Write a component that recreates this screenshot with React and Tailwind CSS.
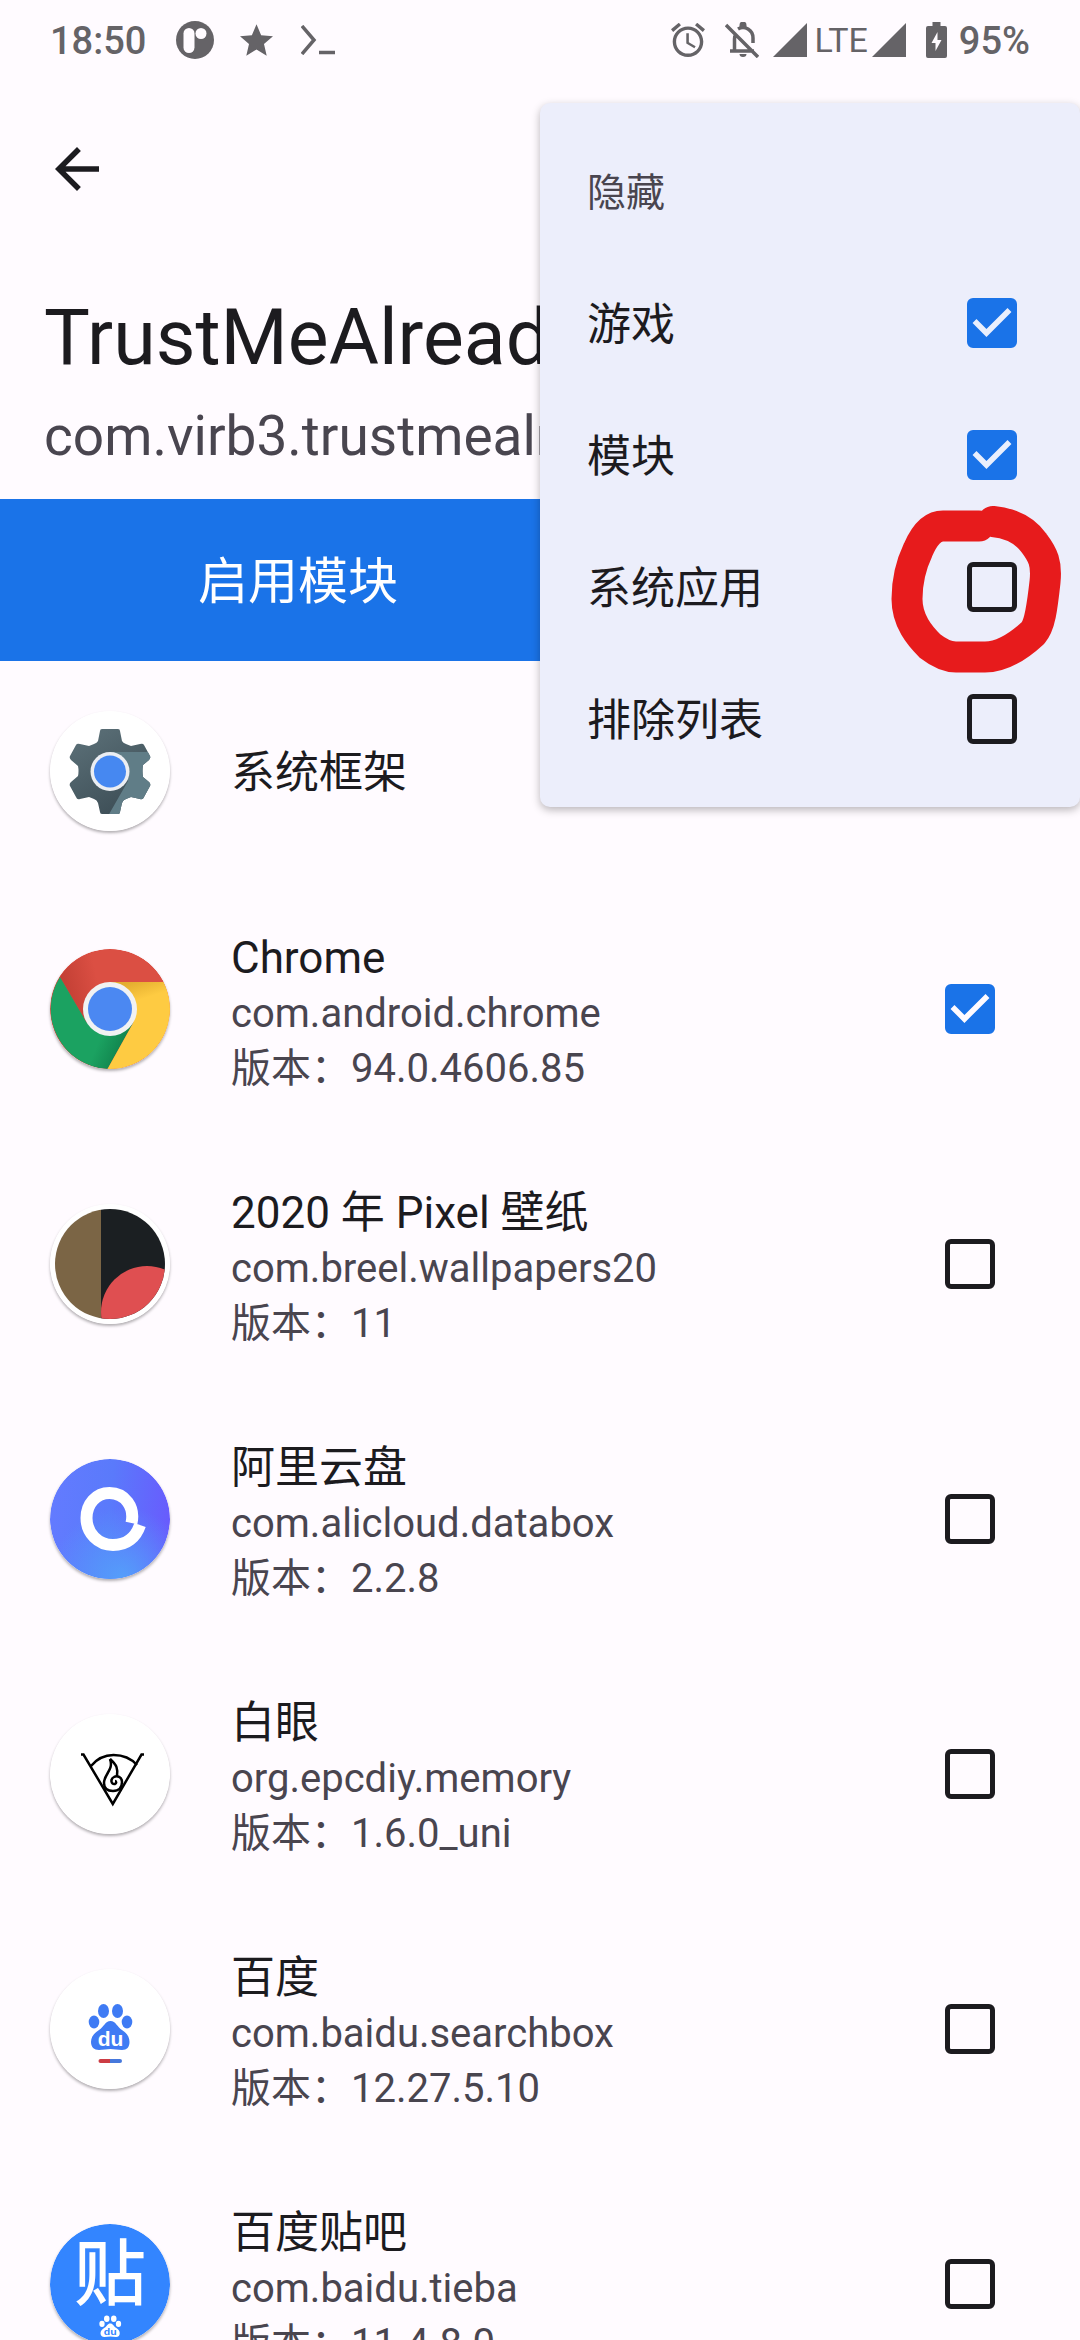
import React from "react";

const filters = [
  { id: "games", label: "游戏", checked: true },
  { id: "modules", label: "模块", checked: true },
  { id: "system", label: "系统应用", checked: false, marked: true },
  { id: "denylist", label: "排除列表", checked: false },
];

const apps = [
  { name: "Chrome", pkg: "com.android.chrome", version: "94.0.4606.85", checked: true, Icon: ChromeIcon },
  { name: "2020 年 Pixel 壁纸", pkg: "com.breel.wallpapers20", version: "11", Icon: WallpaperIcon },
  { name: "阿里云盘", pkg: "com.alicloud.databox", version: "2.2.8", Icon: AliDriveIcon },
  { name: "白眼", pkg: "org.epcdiy.memory", version: "1.6.0_uni", Icon: MemoryIcon },
  { name: "百度", pkg: "com.baidu.searchbox", version: "12.27.5.10", Icon: BaiduIcon },
  { name: "百度贴吧", pkg: "com.baidu.tieba", version: "11.4.8.0", Icon: TiebaIcon },
];

function Checkbox({ id, defaultChecked, tick }) {
  return (
    <span className="relative block size-[50px] shrink-0">
      <input
        id={id}
        type="checkbox"
        defaultChecked={defaultChecked}
        className="peer block size-[50px] appearance-none rounded-[6px] border-[5px] border-[#1c1b1f] checked:border-[#1a73e8] checked:bg-[#1a73e8]"
      />
      <svg viewBox="3 3 18 18" className={"pointer-events-none absolute inset-0 hidden size-full peer-checked:block " + tick} aria-hidden="true">
        <path fill="currentColor" d="M10 17l-5-5 1.41-1.41L10 14.17l7.59-7.59L19 8z" />
      </svg>
    </span>
  );
}

function IconShell({ children, bg }) {
  return (
    <svg viewBox="0 0 120 120" className="size-[120px] shrink-0 rounded-full shadow-[0_2px_3px_rgba(0,0,0,0.3)]" aria-hidden="true">
      <circle cx="60" cy="60" r="60" fill={bg} />
      {children}
    </svg>
  );
}

function GearIcon() {
  return (
    <IconShell bg="#ffffff">
      <defs>
        <linearGradient id="gearDark" x1="0" y1="0" x2="0.6" y2="1">
          <stop offset="0" stopColor="#5f747c" />
          <stop offset="1" stopColor="#3d4e56" />
        </linearGradient>
        <clipPath id="gearClip">
          <path d="M52 18H68Q70 18 70 20L72 30Q73 32 76 33L81 35L90 33Q93 32 94 34L100 45Q101 47 99 49L93 54Q92 60 93 66L99 71Q101 73 100 75L94 86Q93 89 90 88L81 86L76 88Q73 89 72 92L70 101Q70 103 68 103H52Q50 103 50 101L48 92Q47 89 44 88L39 86L30 88Q27 89 26 86L20 75Q19 73 21 71L28 65Q29 60 28 55L21 49Q19 47 20 45L26 34Q27 32 30 33L39 35L44 33Q47 32 48 30L50 20Q50 18 52 18Z" />
        </clipPath>
      </defs>
      <g clipPath="url(#gearClip)">
        <rect x="15" y="15" width="90" height="90" fill="url(#gearDark)" />
        <path d="M60 41H105V105H58L78 70Z" fill="#607d87" />
      </g>
      <circle cx="60" cy="60.500" r="19.500" fill="#eceef2" />
      <circle cx="60" cy="60.500" r="16" fill="#4688f1" />
    </IconShell>
  );
}

function ChromeIcon() {
  return (
    <IconShell bg="#db4b3f">
      <defs>
        <linearGradient id="chromeRed" x1="10" y1="28" x2="45" y2="20" gradientUnits="userSpaceOnUse">
          <stop offset="0" stopColor="#c23f34" />
          <stop offset="1" stopColor="#db4f43" />
        </linearGradient>
        <linearGradient id="chromeGreen" x1="83" y1="90" x2="55" y2="78" gradientUnits="userSpaceOnUse">
          <stop offset="0" stopColor="#0f7d49" />
          <stop offset="1" stopColor="#1ba261" />
        </linearGradient>
        <linearGradient id="chromeYellow" x1="80" y1="33" x2="86" y2="52" gradientUnits="userSpaceOnUse">
          <stop offset="0" stopColor="#e3ad2f" />
          <stop offset="1" stopColor="#fecb42" />
        </linearGradient>
      </defs>
      <path d="M10 28A60 60 0 0 1 113.700 33H60L36 73Z" fill="url(#chromeRed)" />
      <path d="M10 28L36.600 73.500L60 60L83.400 73.500L57.500 120A60 60 0 0 1 10 28Z" fill="url(#chromeGreen)" />
      <path d="M60 33H113.700A60 60 0 0 1 57.500 120L83.400 73.500L60 60Z" fill="url(#chromeYellow)" />
      <circle cx="60" cy="60" r="27" fill="#f1f2f3" />
      <circle cx="60" cy="60" r="22" fill="#4b88f2" />
    </IconShell>
  );
}

function WallpaperIcon() {
  return (
    <IconShell bg="#ffffff">
      <clipPath id="wallClip">
        <circle cx="60" cy="60" r="55" />
      </clipPath>
      <g clipPath="url(#wallClip)">
        <rect width="51" height="120" fill="#7b6545" />
        <rect x="51" width="69" height="120" fill="#1b1f22" />
        <circle cx="97" cy="108" r="46" fill="#df4f51" />
      </g>
    </IconShell>
  );
}

function AliDriveIcon() {
  return (
    <IconShell bg="url(#aliBase)">
      <defs>
        <linearGradient id="aliBase" x1="0" y1="0.300" x2="1" y2="0.400">
          <stop offset="0" stopColor="#637bff" />
          <stop offset="0.500" stopColor="#5a7afb" />
          <stop offset="1" stopColor="#685cfd" />
        </linearGradient>
        <radialGradient id="aliGlow" cx="0.600" cy="1" r="0.600">
          <stop offset="0" stopColor="#549ffa" />
          <stop offset="1" stopColor="#549ffa" stopOpacity="0" />
        </radialGradient>
      </defs>
      <circle cx="60" cy="60" r="60" fill="url(#aliGlow)" />
      <path d="M81.500 64C85 48 75 34 59.500 34C46 34 36.500 45 36.500 59C36.500 74 48 86 63 86C77 86 86 78 90 66" fill="none" stroke="#fff" strokeWidth="12" />
    </IconShell>
  );
}

function MemoryIcon() {
  return (
    <IconShell bg="#ffffff">
      <g fill="none" stroke="#000" strokeWidth="2.500">
        <path d="M31 40.500H33.500L62.800 90L91.500 40.500H94" />
        <path d="M41 52Q50 41 63.500 41Q78 41 87 51" />
        <path d="M60 45C64 56 54 60 54 69C54 75 58 77 63 77C69 77 72 73 72 68C72 63 67 61 64 63C60 65 61 71 65 70C67 69 66 67 65 67" />
        <path d="M60 45C67 51 68 55 67 62" />
      </g>
    </IconShell>
  );
}

function Paw({ color, textColor }) {
  return (
    <g>
      <g fill={color}>
        <ellipse cx="53.500" cy="42" rx="5.500" ry="7" />
        <ellipse cx="67.500" cy="42" rx="5.500" ry="7" />
        <ellipse cx="44" cy="53" rx="5.300" ry="6.500" />
        <ellipse cx="77" cy="53" rx="5.300" ry="6.500" />
        <path d="M60.500 52C55 52 54 58 49 61C44 64 41 68 41 73C41 78 44 81 49 81C53 81 57 80 60.500 80C64 80 68 81 72 81C77 81 79.500 78 79.500 73C79.500 68 77 64 72 61C67 58 66 52 60.500 52Z" />
      </g>
      <text x="60.500" y="77" textAnchor="middle" fontSize="21" fontWeight="700" fontFamily="Liberation Sans, sans-serif" fill={textColor}>du</text>
    </g>
  );
}

function BaiduIcon() {
  return (
    <IconShell bg="#ffffff">
      <Paw color="#3f7bf4" textColor="#fff" />
      <path d="M60 90H50.500A2 2 0 0 0 50.500 94H60Z" fill="#cc3c44" />
      <path d="M60 90H70A2 2 0 0 1 70 94H60Z" fill="#4678dc" />
    </IconShell>
  );
}

function TiebaIcon() {
  return (
    <IconShell bg="#3385ff">
      <text x="60" y="75" textAnchor="middle" fontSize="72" fontWeight="500" fontFamily="Noto Sans CJK SC, sans-serif" fill="#fff">贴</text>
      <g transform="translate(30 75) scale(0.500 0.470)">
        <Paw color="#fff" textColor="#3385ff" />
      </g>
    </IconShell>
  );
}

function StatusBar() {
  return (
    <header className="flex h-[92px] shrink-0 items-center justify-between pl-[50px] pr-[50px] pb-3 text-[38px] leading-none text-[#656367]">
      <div className="flex items-center">
        <span className="pt-[2px] font-medium">18:50</span>
        <svg viewBox="0 0 38 38" className="ml-[30px] size-[38px]" aria-hidden="true">
          <circle cx="19" cy="19" r="19" fill="currentColor" />
          <rect x="7.500" y="7" width="11" height="25" rx="5.500" fill="#fffbff" />
          <circle cx="25" cy="12.500" r="5.500" fill="#fffbff" />
        </svg>
        <svg viewBox="2 2 20 19" className="ml-[26px] h-[32px] w-[33px]" aria-hidden="true">
          <path fill="currentColor" d="M12 17.270L18.180 21l-1.640-7.030L22 9.240l-7.190-.610L12 2 9.190 8.630 2 9.240l5.460 4.730L5.820 21z" />
        </svg>
        <svg viewBox="0 0 34 30" className="ml-[28px] h-[30px] w-[34px]" fill="none" stroke="currentColor" strokeWidth="3.500" aria-hidden="true">
          <path d="M1 1L13 15L1 29M18 27.500H34" />
        </svg>
      </div>
      <div className="flex items-center">
        <svg viewBox="2 2 20 20" className="size-[34px]" aria-hidden="true">
          <path fill="currentColor" d="M22 5.720l-4.600-3.860-1.290 1.530 4.600 3.860L22 5.720zM7.880 3.390L6.600 1.860 2 5.710l1.290 1.530 4.590-3.850zM12.500 8H11v6l4.750 2.850.75-1.230-4-2.370V8zM12 4c-4.970 0-9 4.030-9 9s4.020 9 9 9c4.970 0 9-4.030 9-9s-4.030-9-9-9zm0 16c-3.870 0-7-3.130-7-7s3.130-7 7-7 7 3.130 7 7-3.130 7-7 7z" />
        </svg>
        <svg viewBox="0 0 34 36" className="ml-[20px] h-[36px] w-[34px]" fill="none" stroke="currentColor" strokeWidth="3.500" aria-hidden="true">
          <path d="M1 3L33 35M5 29H29M9.500 28V17Q9.500 14 11 12M13 7Q18 4 23 7Q28 10 28 16V21" />
          <path d="M14.500 3a3.500 3.500 0 0 1 7 0v2h-7zM14.500 32h7a3.500 3 0 0 1-7 0z" fill="currentColor" stroke="none" />
        </svg>
        <svg viewBox="0 0 34 34" className="ml-[14px] size-[34px]" aria-hidden="true">
          <path d="M34 0V34H0Z" fill="currentColor" />
        </svg>
        <span className="ml-[7px] text-[34px]">LTE</span>
        <svg viewBox="0 0 34 34" className="ml-[4px] size-[34px]" aria-hidden="true">
          <path d="M34 0V34H0Z" fill="currentColor" />
        </svg>
        <svg viewBox="0 0 21 36" className="ml-[20px] h-[36px] w-[21px]" aria-hidden="true">
          <path d="M6.500 0H14.500V4H19Q21 4 21 6V34Q21 36 19 36H2Q0 36 0 34V6Q0 4 2 4H6.500Z" fill="currentColor" />
          <path d="M11.500 10V18H15.500L9.500 29V21H5.500Z" fill="#fffbff" />
        </svg>
        <span className="ml-[12px] pt-[2px] font-medium">95%</span>
      </div>
    </header>
  );
}

function FilterMenu() {
  return (
    <section aria-label="隐藏" className="absolute right-0 top-[103px] w-1/2 rounded-[10px] bg-[#eceefb] py-[22px] pl-[47px] pr-[63px] shadow-[0_3px_8px_rgba(0,0,0,0.28)]">
      <h2 className="flex h-[132px] items-center pt-1 text-[39px] text-[#49454f]">隐藏</h2>
      {filters.map((f) => (
        <div key={f.id} className="relative flex h-[132px] items-center justify-between">
          <label htmlFor={f.id} className="pt-1 text-[44px] text-[#1c1b1f]">{f.label}</label>
          <Checkbox id={f.id} defaultChecked={f.checked} tick="text-[#e9effd]" />
          {f.marked && (
            <svg viewBox="880 500 200 180" className="pointer-events-none absolute -right-[63px] -top-[22px] h-[180px] w-[200px]" aria-hidden="true">
              <path
                d="M979 527H943C932 527 924 537 918 551C909 570 907 588 907 600C907 622 920 637 930 647C939 654 948 658 956 658H985C1003 658 1020 646 1033 634C1040 626 1042 610 1045 583C1047 564 1043 556 1034 544C1024 530 1008 524 993 522.500"
                fill="none"
                stroke="#e71b1c"
                strokeWidth="31"
                strokeLinecap="round"
                strokeLinejoin="round"
              />
            </svg>
          )}
        </div>
      ))}
    </section>
  );
}

function AppRow({ app }) {
  const { Icon } = app;
  return (
    <li className="flex min-h-[255px] items-center pl-[50px] pr-[85px]">
      <Icon />
      <label htmlFor={app.pkg} className="ml-[61px] grow pt-[10px] text-[40px] leading-[55px] text-[#49454f]">
        <span className="block text-[44px] text-[#1c1b1f]">{app.name}</span>
        <span className="block">{app.pkg}</span>
        <span className="block">版本：{app.version}</span>
      </label>
      <Checkbox id={app.pkg} defaultChecked={app.checked} tick="text-[#fffbff]" />
    </li>
  );
}

export default function App() {
  return (
    <div lang="zh-CN" className="relative flex h-screen flex-col overflow-hidden bg-[#fffbff] font-['Roboto','Noto_Sans_CJK_SC',sans-serif] text-[#1c1b1f]">
      <StatusBar />
      <nav className="flex h-[154px] shrink-0 items-center px-[44px]">
        <button type="button" aria-label="返回">
          <svg viewBox="0 0 24 24" className="size-[66px]" aria-hidden="true">
            <path fill="currentColor" d="M20 11H7.830l5.590-5.590L12 4l-8 8 8 8 1.410-1.410L7.830 13H20v-2z" />
          </svg>
        </button>
      </nav>
      <div className="shrink-0 whitespace-nowrap px-[44px] pb-[31px] pt-[47px]">
        <h1 className="text-[77px] leading-[90px]">TrustMeAlready</h1>
        <p className="mt-[21px] text-[55px] leading-[64px] text-[#49454f]">com.virb3.trustmealready</p>
      </div>
      <button type="button" className="h-[162px] shrink-0 bg-[#1a73e8] pl-[198px] pt-1 text-left text-[50px] text-white">启用模块</button>
      <ul className="min-h-0 flex-1 overflow-y-auto [scrollbar-width:none]">
        <li className="flex min-h-[220px] items-center pl-[50px]">
          <GearIcon />
          <span className="ml-[61px] pt-1 text-[44px]">系统框架</span>
        </li>
        {apps.map((app) => (
          <AppRow key={app.pkg} app={app} />
        ))}
      </ul>
      <FilterMenu />
    </div>
  );
}
